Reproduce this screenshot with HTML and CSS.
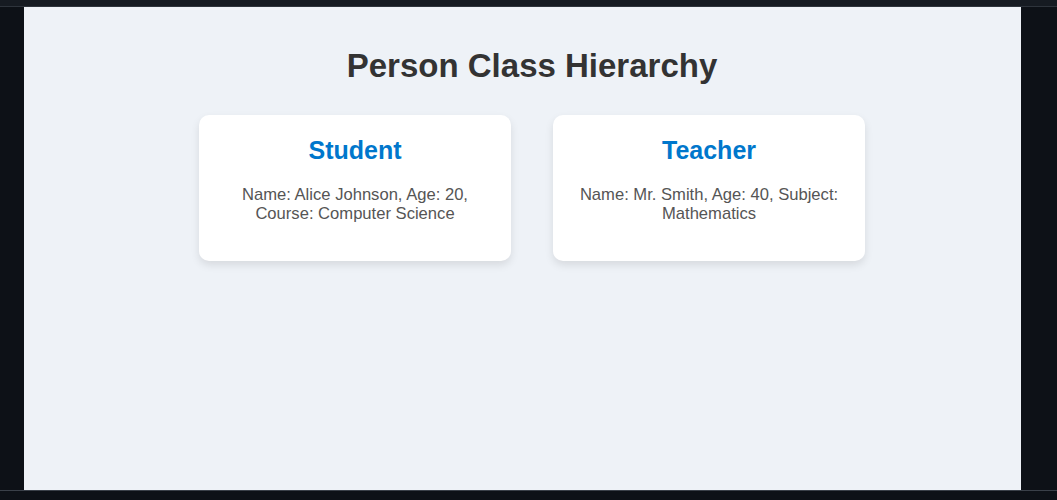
FILE: index.html
```html
<!DOCTYPE html>
<html lang="en">
<head>
<meta charset="utf-8">
<title>Person Class Hierarchy</title>
<link rel="stylesheet" href="styles.css">
</head>
<body>
<div class="topbar"></div>
<div class="frame">
  <div class="page">
    <h1 class="title">Person Class Hierarchy</h1>
    <div class="cards">
      <div class="card">
        <h2 class="card-title">Student</h2>
        <p class="card-text">Name: Alice Johnson, Age: 20, Course: Computer Science</p>
      </div>
      <div class="card">
        <h2 class="card-title">Teacher</h2>
        <p class="card-text">Name: Mr. Smith, Age: 40, Subject: Mathematics</p>
      </div>
    </div>
  </div>
</div>
<div class="bottomline"></div>
</body>
</html>
```
FILE: styles.css
```css
html, body {
  margin: 0;
  padding: 0;
  background: #0d1117;
  height: 100%;
  overflow: hidden;
}
.topbar {
  height: 6px;
  background: #161b22;
  border-bottom: 1px solid #2e343c;
}
.frame {
  margin-left: 24px;
  width: 997px;
  height: 483px;
  overflow: hidden;
  background: #eef2f7;
}
.bottomline {
  height: 0;
  border-top: 1px solid #3a4049;
}
.page {
  width: 1016px;
  box-sizing: border-box;
  padding: 20px;
  font-family: "Liberation Sans", Arial, sans-serif;
}
.title {
  margin: 20px 0 30px;
  line-height: 38px;
  text-align: center;
  font-size: 33px;
  font-weight: bold;
  color: #333333;
}
.cards {
  display: flex;
  justify-content: center;
  gap: 42px;
}
.card {
  width: 312px;
  box-sizing: border-box;
  padding: 21px 20px 20px;
  background: #ffffff;
  border-radius: 10px;
  box-shadow: 0 4px 8px rgba(0, 0, 0, 0.1);
  text-align: center;
}
.card-title {
  margin: 0 0 21px;
  font-size: 25px;
  line-height: 28px;
  font-weight: bold;
  color: #0077cc;
}
.card-text {
  margin: 0 0 18px;
  font-size: 16.6px;
  line-height: 19px;
  color: #555555;
}
```
